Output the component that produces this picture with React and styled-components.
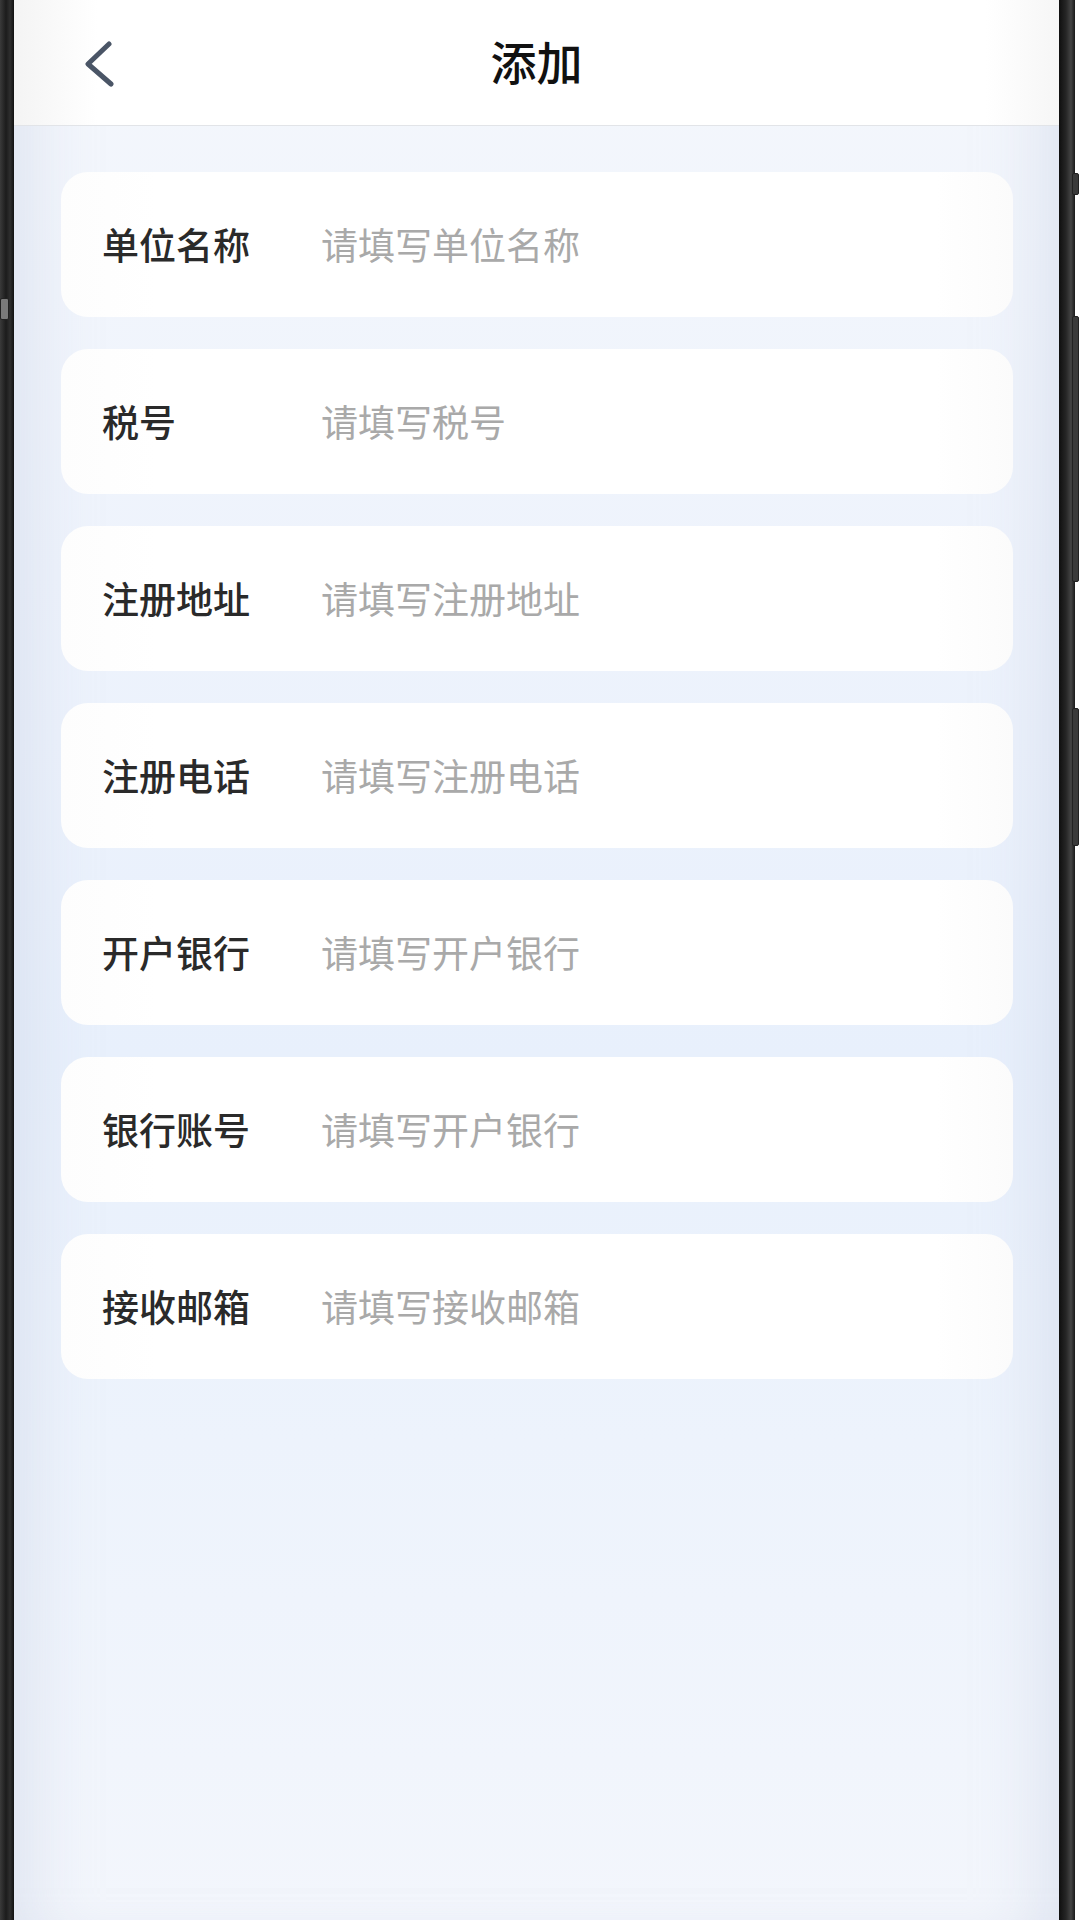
import styled, { createGlobalStyle } from "styled-components";

const GlobalStyle = createGlobalStyle`
  html, body {
    margin: 0;
    padding: 0;
    background: #ffffff;
  }
  body {
    font-family: "Noto Sans CJK SC", "Noto Sans", sans-serif;
  }
  * {
    box-sizing: border-box;
  }
`;

const fields = [
  { label: "单位名称", placeholder: "请填写单位名称" },
  { label: "税号", placeholder: "请填写税号" },
  { label: "注册地址", placeholder: "请填写注册地址" },
  { label: "注册电话", placeholder: "请填写注册电话" },
  { label: "开户银行", placeholder: "请填写开户银行" },
  { label: "银行账号", placeholder: "请填写开户银行" },
  { label: "接收邮箱", placeholder: "请填写接收邮箱" },
];

const App = () => {
  return (
    <>
      <GlobalStyle />
      <Device>
        <SideButton $side="left" $top={298} $height={22} />
        <SideButton $side="right" $top={173} $height={22} />
        <SideButton $side="right" $top={316} $height={266} />
        <SideButton $side="right" $top={708} $height={138} />
        <Screen>
          <Header>
            <BackButton aria-label="返回">
              <svg width="30" height="46" viewBox="0 0 30 46" fill="none">
                <path
                  d="M25 3 L4 23 L27 43"
                  stroke="#4a5566"
                  strokeWidth="5"
                  strokeLinecap="round"
                  strokeLinejoin="round"
                />
              </svg>
            </BackButton>
            <Title>添加</Title>
            <span />
          </Header>
          <Content>
            {fields.map((f) => (
              <FieldCard key={f.label}>
                <Label>{f.label}</Label>
                <Placeholder>{f.placeholder}</Placeholder>
              </FieldCard>
            ))}
          </Content>
        </Screen>
      </Device>
    </>
  );
};

export default App;

const Device = styled.div`
  position: relative;
  width: 1080px;
  height: 1920px;
  display: flex;
  padding-left: 14px;
  padding-right: 21px;
  background: linear-gradient(
    90deg,
    #3a3a3a 0px,
    #1c1c1c 6px,
    #2e2e2e 10px,
    #111 14px,
    transparent 14px,
    transparent 1059px,
    #0f0f0f 1059px,
    #262626 1066px,
    #444 1071px,
    #1a1a1a 1075px,
    #ffffff 1075px
  );
  overflow: hidden;
`;

const SideButton = styled.div`
  position: absolute;
  top: ${(p) => p.$top}px;
  height: ${(p) => p.$height}px;
  width: ${(p) => (p.$side === "left" ? 9 : 7)}px;
  ${(p) => (p.$side === "left" ? "left: 0;" : "right: 1px;")}
  background: ${(p) => (p.$side === "left" ? "#7a7a7a" : "#3a3a3a")};
  border: 1px solid #222;
  border-radius: 2px;
`;

const Screen = styled.div`
  flex: 1;
  display: flex;
  flex-direction: column;
  background: linear-gradient(
    180deg,
    #f4f7fc 0%,
    #eef3fc 30%,
    #e8f0fc 55%,
    #edf3fc 75%,
    #f3f6fc 100%
  );
  box-shadow: inset 60px 0 60px -40px rgba(205, 214, 232, 0.5),
    inset -60px 0 60px -40px rgba(205, 214, 232, 0.5);
`;

const Header = styled.header`
  height: 126px;
  flex-shrink: 0;
  display: grid;
  grid-template-columns: 1fr auto 1fr;
  align-items: center;
  background: linear-gradient(
    90deg,
    #f4f4f4 0%,
    #ffffff 8%,
    #ffffff 93%,
    #f6f6f6 100%
  );
  border-bottom: 1px solid #e2e4e8;
`;

const BackButton = styled.button`
  justify-self: start;
  margin-left: 70px;
  margin-top: 2px;
  padding: 0;
  border: none;
  background: none;
  display: flex;
  cursor: pointer;
`;

const Title = styled.h1`
  margin: 0 0 5px;
  font-size: 46px;
  font-weight: 500;
  color: #111;
  line-height: 1;
  letter-spacing: 0;
`;

const Content = styled.main`
  display: flex;
  flex-direction: column;
  gap: 32px;
  padding: 46px 46px 0 47px;
`;

const FieldCard = styled.div`
  height: 145px;
  display: flex;
  align-items: center;
  padding-left: 41px;
  border-radius: 27px;
  background: linear-gradient(90deg, #fdfdfd 0%, #ffffff 10%, #ffffff 92%, #fbfbfb 100%);
`;

const Label = styled.span`
  width: 219px;
  flex-shrink: 0;
  font-size: 37px;
  font-weight: 500;
  color: #2a2a2a;
  line-height: 1;
`;

const Placeholder = styled.span`
  font-size: 37px;
  font-weight: 400;
  color: #a9a9a9;
  line-height: 1;
`;
